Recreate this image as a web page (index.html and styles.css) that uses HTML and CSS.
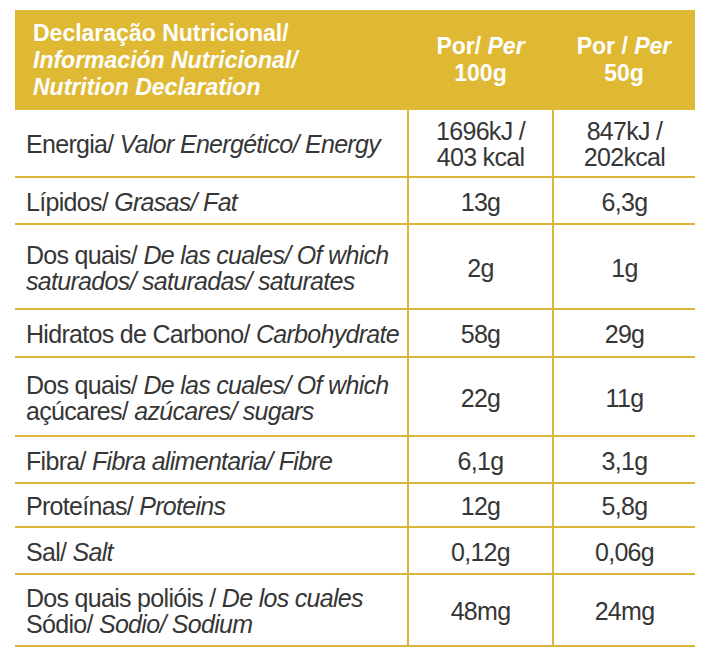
FILE: index.html
```html
<!DOCTYPE html>
<html lang="pt">
<head>
<meta charset="utf-8">
<title>Declaração Nutricional</title>
<link rel="stylesheet" href="styles.css">
</head>
<body>
<table class="nutri">
  <colgroup>
    <col class="c-name">
    <col class="c-val">
    <col class="c-val2">
  </colgroup>
  <thead>
    <tr class="head">
      <th class="h-name">Declaração Nutricional/<br><i>Información Nutricional/</i><br><i>Nutrition Declaration</i></th>
      <th class="h-val">Por/ <i>Per</i><br>100g</th>
      <th class="h-val">Por / <i>Per</i><br>50g</th>
    </tr>
  </thead>
  <tbody>
    <tr class="r-energy">
      <td class="name">Energia/ <i>Valor Energético/ Energy</i></td>
      <td class="val">1696kJ /<br>403 kcal</td>
      <td class="val">847kJ /<br>202kcal</td>
    </tr>
    <tr class="r-fat">
      <td class="name">Lípidos/ <i>Grasas/ Fat</i></td>
      <td class="val">13g</td>
      <td class="val">6,3g</td>
    </tr>
    <tr class="r-sat">
      <td class="name">Dos quais/ <i>De las cuales/ Of which</i><br><i>saturados/ saturadas/ saturates</i></td>
      <td class="val">2g</td>
      <td class="val">1g</td>
    </tr>
    <tr class="r-carb">
      <td class="name">Hidratos de Carbono/ <i>Carbohydrate</i></td>
      <td class="val">58g</td>
      <td class="val">29g</td>
    </tr>
    <tr class="r-sug">
      <td class="name">Dos quais/ <i>De las cuales/ Of which</i><br>açúcares/ <i>azúcares/ sugars</i></td>
      <td class="val">22g</td>
      <td class="val">11g</td>
    </tr>
    <tr class="r-fib">
      <td class="name">Fibra/ <i>Fibra alimentaria/ Fibre</i></td>
      <td class="val">6,1g</td>
      <td class="val">3,1g</td>
    </tr>
    <tr class="r-prot">
      <td class="name">Proteínas/ <i>Proteins</i></td>
      <td class="val">12g</td>
      <td class="val">5,8g</td>
    </tr>
    <tr class="r-salt">
      <td class="name">Sal/ <i>Salt</i></td>
      <td class="val">0,12g</td>
      <td class="val">0,06g</td>
    </tr>
    <tr class="r-sod">
      <td class="name">Dos quais polióis / <i>De los cuales</i><br>Sódio/ <i>Sodio/ Sodium</i></td>
      <td class="val">48mg</td>
      <td class="val">24mg</td>
    </tr>
  </tbody>
</table>
</body>
</html>
```

FILE: styles.css
```css
html, body {
  margin: 0;
  padding: 0;
  background: #ffffff;
}

body {
  padding: 10px 0 0 15px;
  font-family: "Liberation Sans", Arial, sans-serif;
  color: #363636;
}

.nutri {
  border-collapse: collapse;
  table-layout: fixed;
  width: 680px;
}

.c-name { width: 393px; }
.c-val { width: 145px; }
.c-val2 { width: 142px; }

.nutri i { font-style: italic; }

.head {
  background: #e0b934;
  height: 100px;
}

.head th {
  color: #ffffff;
  font-weight: bold;
  font-size: 23px;
  line-height: 27px;
  padding: 0;
  vertical-align: middle;
}

.h-name {
  text-align: left;
  padding-left: 18px !important;
}

.h-val {
  text-align: center;
}

.nutri td {
  border-bottom: 2px solid #dcb63a;
  font-size: 25px;
  line-height: 26px;
  letter-spacing: -0.7px;
  padding: 0;
  vertical-align: middle;
  white-space: nowrap;
}

.nutri td + td {
  border-left: 2px solid #dcb63a;
}

.name {
  text-align: left;
  padding: 2px 0 0 11px !important;
}

.val {
  text-align: center;
  padding-top: 2px !important;
}

.r-energy { height: 67px; }
.r-fat { height: 47px; }
.r-sat { height: 85px; }
.r-carb { height: 48px; }
.r-sug { height: 79px; }
.r-fib { height: 47px; }
.r-prot { height: 44px; }
.r-salt { height: 47px; }
.r-sod { height: 72px; }
```
